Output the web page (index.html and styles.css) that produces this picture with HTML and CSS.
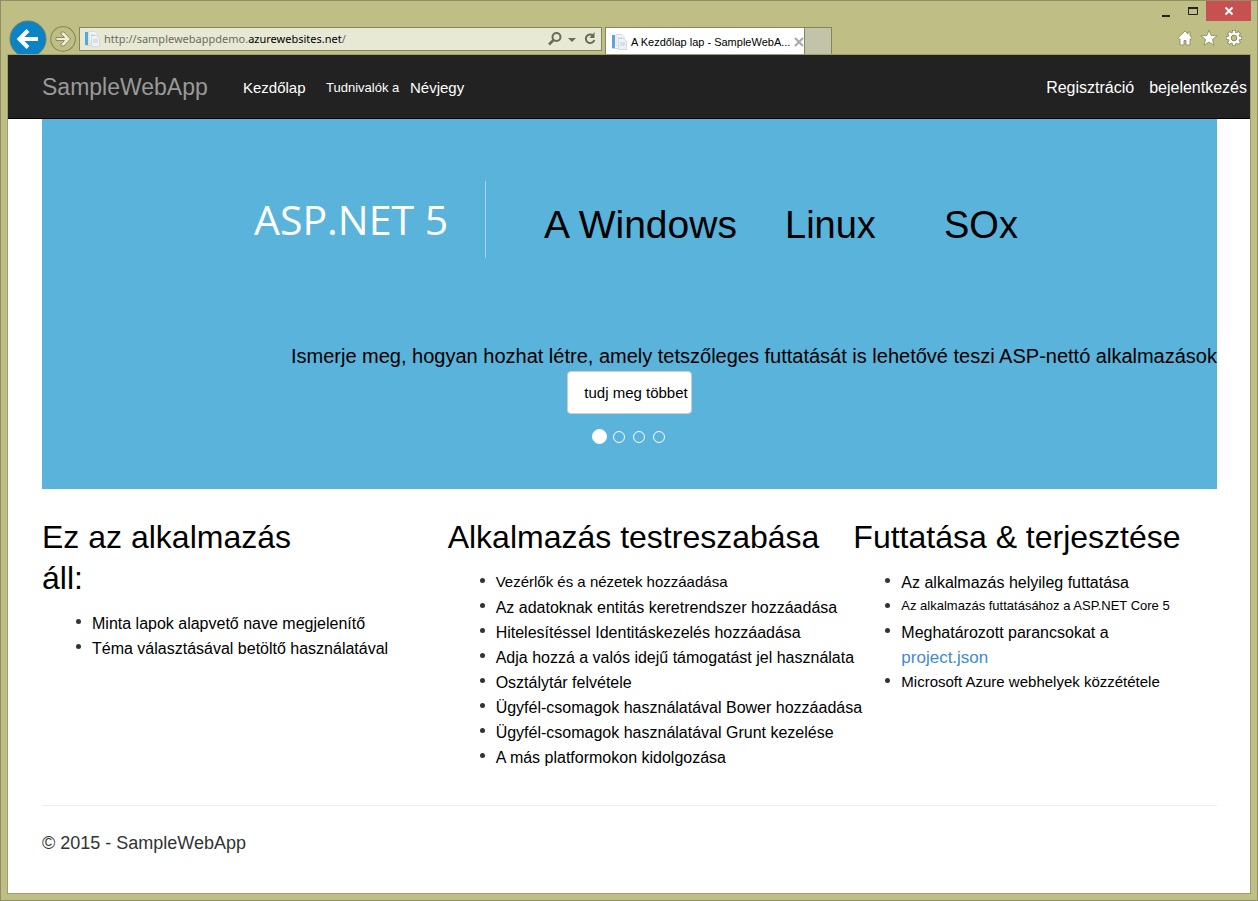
FILE: index.html
```html
<!DOCTYPE html>
<html lang="hu">
<head>
<meta charset="utf-8">
<title>A Kezdőlap lap - SampleWebApp</title>
<link rel="stylesheet" href="styles.css">
</head>
<body>
<svg class="defs" width="0" height="0" aria-hidden="true">
  <symbol id="page-icon" viewBox="0 0 16 16">
    <path d="M5 .5h6l2 2V12H5z" fill="#f4f5f7" stroke="#d8dce2"/>
    <path d="M7.500 4.500h5l3 2.500v8.500h-8z" fill="#eef1f5" stroke="#d3d8e0"/>
    <path d="M7 4h4M9 9h5M9 11h5" stroke="#c3cad6"/>
    <path d="M1 1h3v13H1z" fill="#5aa6d8"/>
    <path d="M1 14h7v1H1z" fill="#c9d9e6"/>
  </symbol>
</svg>
<div class="window">
  <header class="chrome">
    <div class="titlebar">
      <button class="win-btn" aria-label="Kis méret"><svg width="10" height="14"><path d="M1 11h8v2H1z" fill="#222"/></svg></button>
      <button class="win-btn" aria-label="Teljes méret"><svg width="12" height="14"><path d="M1.500 3.500h9v7h-9z" fill="none" stroke="#222"/><path d="M1 4h10" stroke="#222" stroke-width="2"/></svg></button>
      <button class="win-btn close" aria-label="Bezárás"><svg width="10" height="10"><path d="M1.500 1.500l7 7M8.500 1.500l-7 7" stroke="#fff" stroke-width="2"/></svg></button>
    </div>
    <div class="toolbar">
      <button class="back" aria-label="Vissza"><svg width="38" height="38" viewBox="0 0 38 38"><circle cx="19" cy="19" r="18" fill="#0a84c6" stroke="#6b7b62"/><path d="M29 19H11M19 10.500L10.500 19l8.500 8.500" fill="none" stroke="#fff" stroke-width="4"/></svg></button>
      <button class="forward" aria-label="Előre"><svg width="26" height="26" viewBox="0 0 26 26"><circle cx="13" cy="13" r="12.300" fill="none" stroke="#8c8c60" stroke-width="1.200"/><path d="M6 11.500h8.500L11 8V6h3l6.500 7L14 20h-3v-2l3.500-3.500H6z" fill="#eceed2" stroke="#8c8c60"/></svg></button>
      <div class="address">
        <svg width="16" height="16"><use href="#page-icon"/></svg>
        <span class="url">http://samplewebappdemo.<b>azurewebsites.net</b>/</span>
        <button aria-label="Keresés"><svg width="14" height="14"><circle cx="8.500" cy="5" r="4" fill="none" stroke="#696a5a" stroke-width="2"/><path d="M5.500 8L1 12.500" stroke="#696a5a" stroke-width="2.500"/></svg></button>
        <button aria-label="Lista"><svg width="8" height="14"><path d="M0 6h8L4 10z" fill="#696a5a"/></svg></button>
        <button aria-label="Frissítés"><svg width="12" height="14"><path d="M9 3.500A4.300 4.300 0 1 0 10.300 8" fill="none" stroke="#696a5a" stroke-width="2"/><path d="M10.500 0v6H5.500z" fill="#696a5a"/></svg></button>
      </div>
      <div class="tab">
        <svg width="16" height="16"><use href="#page-icon"/></svg>
        <span>A Kezdőlap lap - SampleWebA...</span>
        <button aria-label="Lap bezárása"><svg width="10" height="10"><path d="M1 1l8 8M9 1L1 9" stroke="#aaa" stroke-width="2.200"/></svg></button>
      </div>
      <button class="new-tab" aria-label="Új lap"></button>
      <div class="tools">
        <button aria-label="Kezdőlap"><svg width="16" height="16" viewBox="0 0 16 16"><path d="M8 1L.8 8l1.400 1.400L3 8.800V15h4v-4.500h2V15h4V8.800l.8.600L15.200 8 13 5.900V2h-2v2z" fill="#fff" stroke="#85855e" stroke-width=".8"/></svg></button>
        <button aria-label="Kedvencek"><svg width="18" height="18" viewBox="0 0 18 18"><path d="M9 1l2.100 5.500 6 .3-4.700 3.700 1.600 5.800L9 13l-5 3.300 1.600-5.800L.9 6.800l6-.3z" fill="#fff" stroke="#85855e" stroke-width=".8"/></svg></button>
        <button aria-label="Eszközök"><svg width="18" height="18" viewBox="0 0 18 18"><path d="M9 1v16M1 9h16M3.300 3.300l11.400 11.400M14.700 3.300L3.300 14.700" stroke="#85855e" stroke-width="4"/><circle cx="9" cy="9" r="6" fill="#85855e"/><path d="M9 1.700v14.600M1.700 9h14.600M3.900 3.900l10.200 10.200M14.100 3.900L3.900 14.100" stroke="#fff" stroke-width="2.500"/><circle cx="9" cy="9" r="5.400" fill="#fff"/><circle cx="9" cy="9" r="2.800" fill="#bfbf85" stroke="#85855e"/></svg></button>
      </div>
    </div>
  </header>
  <div class="page">
    <nav class="navbar">
      <a class="brand" href="#">SampleWebApp</a>
      <a class="home" href="#">Kezdőlap</a>
      <a class="small" href="#">Tudnivalók a</a>
      <a href="#">Névjegy</a>
      <div class="account"><a href="#">Regisztráció</a><a href="#">bejelentkezés</a></div>
    </nav>
    <main class="container">
      <section class="hero">
        <div class="banner">
          <span class="logo">ASP.NET 5</span>
          <div class="platforms"><span class="windows">A Windows</span><span class="linux">Linux</span><span>SOx</span></div>
        </div>
        <p>Ismerje meg, hogyan hozhat létre, amely tetszőleges futtatását is lehetővé teszi ASP-nettó alkalmazások</p>
        <a class="more" href="#">tudj meg többet</a>
        <div class="dots">
          <button class="active" aria-label="1. dia"></button><button aria-label="2. dia"></button><button aria-label="3. dia"></button><button aria-label="4. dia"></button>
        </div>
      </section>
      <div class="columns">
        <section>
          <h2>Ez az alkalmazás<br>áll:</h2>
          <ul>
            <li><span>Minta lapok alapvető nave megjelenítő</span></li>
            <li><span>Téma választásával betöltő használatával</span></li>
          </ul>
        </section>
        <section>
          <h2>Alkalmazás testreszabása</h2>
          <ul>
            <li class="medium"><span>Vezérlők és a nézetek hozzáadása</span></li>
            <li><span>Az adatoknak entitás keretrendszer hozzáadása</span></li>
            <li><span>Hitelesítéssel Identitáskezelés hozzáadása</span></li>
            <li><span>Adja hozzá a valós idejű támogatást jel használata</span></li>
            <li><span>Osztálytár felvétele</span></li>
            <li><span>Ügyfél-csomagok használatával Bower hozzáadása</span></li>
            <li><span>Ügyfél-csomagok használatával Grunt kezelése</span></li>
            <li><span>A más platformokon kidolgozása</span></li>
          </ul>
        </section>
        <section>
          <h2>Futtatása &amp; terjesztése</h2>
          <ul>
            <li><span>Az alkalmazás helyileg futtatása</span></li>
            <li class="small"><span>Az alkalmazás futtatásához a ASP.NET Core 5</span></li>
            <li><span>Meghatározott parancsokat a<br><a href="#">project.json</a></span></li>
            <li class="medium"><span>Microsoft Azure webhelyek közzététele</span></li>
          </ul>
        </section>
      </div>
      <footer>© 2015 - SampleWebApp</footer>
    </main>
  </div>
</div>
</body>
</html>
```
FILE: styles.css
```css
* { box-sizing: border-box; }
body { margin: 0; font-family: "Liberation Sans", Arial, sans-serif; color: #000; }
button { border: 0; padding: 0; margin: 0; background: none; display: flex; align-items: center; justify-content: center; }
a { text-decoration: none; color: inherit; }
svg { display: block; flex: none; }
.defs { position: absolute; }
.window { min-height: 100vh; display: flex; flex-direction: column; background: #bfbf85; border: 1px solid #8f8f66; padding: 0 6px 6px; }

.titlebar { display: flex; justify-content: flex-end; height: 20px; }
.win-btn { width: 27px; }
.win-btn.close { width: 45px; background: #c75050; }
.toolbar { display: flex; height: 33px; align-items: flex-end; padding: 0 8px 0 2px; }
.back { height: 34px; width: 38px; overflow: hidden; align-items: flex-start; }
.forward { margin: 0 3px 2px; }
.address { display: flex; align-items: center; height: 24px; width: 523px; margin-bottom: 3px; padding: 0 5px 0 4px; gap: 6px; background: #e7e9d4; border: 1px solid #85855e; }
.url { flex: 1; margin-left: -2px; font: 11px/20px "Noto Sans", sans-serif; color: #6c6d5f; white-space: nowrap; }
.url b { font-weight: 400; color: #000; }
.address button:last-child { margin-left: 2px; }
.tab { display: flex; align-items: center; width: 200px; height: 27px; margin-left: 3px; padding: 2px 5px 0; gap: 4px; background: #fff; border: 1px solid #85855e; border-bottom: 0; }
.tab span { flex: 1; font-size: 11px; line-height: 16px; white-space: nowrap; }
.new-tab { width: 27px; height: 27px; background: #c2c3a8; border: 1px solid #85855e; border-width: 1px 1px 0 0; }
.tools { display: flex; align-items: center; gap: 7px; height: 32px; margin-left: auto; }

.page { flex: 1; background: #fff; border: 1px solid #9d9d6e; }
.navbar { display: flex; align-items: center; height: 64px; padding: 2px 3px 0 34px; background: #222; border-bottom: 1px solid #000; color: #fff; font-size: 15px; white-space: nowrap; }
.brand { width: 201px; font-size: 23px; color: #999; }
.navbar .home { width: 83px; }
.navbar .small { width: 84px; font-size: 13px; }
.account { display: flex; gap: 15px; margin-left: auto; font-size: 16px; }

.container { padding: 0 33px 0 34px; }
.hero { display: flex; flex-direction: column; align-items: center; padding: 62px 0 45px; background: #59b3da; white-space: nowrap; }
.banner { align-self: stretch; display: flex; align-items: center; height: 77px; padding-left: 212px; }
.logo { display: flex; align-items: center; align-self: stretch; width: 232px; margin-right: 58px; border-right: 1px solid #a4d5eb; font: 41px/77px "Open Sans", sans-serif; color: #fff; }
.platforms { display: flex; align-items: baseline; padding-top: 11px; font-size: 38px; }
.windows { width: 241px; font-size: 39px; }
.linux { width: 159px; }
.hero p { align-self: flex-end; margin: 86px 0 3px; font-size: 20px; line-height: 24px; }
.more { padding: 1px 3px 0 16px; background: #fff; border: 1px solid #ccc; border-radius: 4px; font-size: 15px; line-height: 40px; }
.dots { display: flex; align-items: center; gap: 8px; height: 15px; margin: 15px 2px 0 0; }
.dots button { width: 12px; height: 12px; border: 1px solid #fff; border-radius: 50%; }
.dots .active { width: 15px; height: 15px; background: #fff; margin-right: -2px; }

.columns { display: grid; grid-template-columns: repeat(3, minmax(0, 1fr)); gap: 42px; padding: 28px 0 35px; border-bottom: 1px solid #eee; white-space: nowrap; }
h2 { margin: 0 0 12px; font-size: 32px; font-weight: 400; line-height: 41px; }
ul { list-style: none; margin: 0; padding: 0 0 0 33px; }
.columns section:first-child ul { padding-left: 35px; }
li { display: flex; gap: 11px; font-size: 16px; line-height: 25px; }
li::before { content: ""; flex: none; width: 5px; height: 5px; margin: 8px 0 0 -1px; border-radius: 50%; background: #333; }
li.medium { font-size: 15px; line-height: 24px; padding-bottom: 1px; }
li.small { font-size: 13px; line-height: 21px; padding-bottom: 4px; }
li a { font-size: 17px; color: #428bca; }
footer { padding: 24px 0; font-size: 18px; line-height: 26px; color: #333; }
```
